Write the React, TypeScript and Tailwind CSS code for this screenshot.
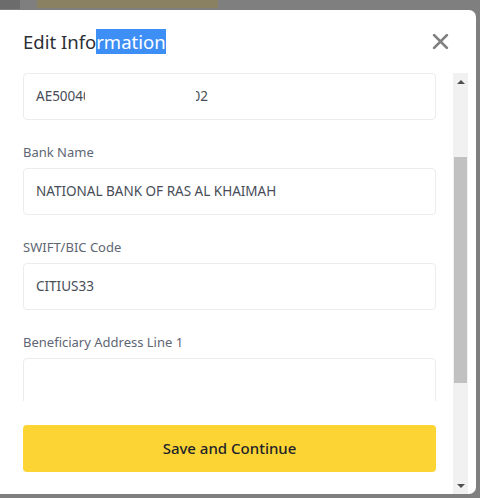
import React from 'react';

const fields = [
  { label: 'Bank Name', value: 'NATIONAL BANK OF RAS AL KHAIMAH' },
  { label: 'SWIFT/BIC Code', value: 'CITIUS33' },
  { label: 'Beneficiary Address Line 1', value: '' },
];

const Input: React.FC<{ children?: React.ReactNode }> = ({ children }) => (
  <div className="h-[47px] shrink-0 rounded-[4px] border border-[#eaecef] flex items-center px-[12px] text-[13.5px] text-[#474d57]">
    {children}
  </div>
);

const Scrollbar: React.FC = () => (
  <div className="w-[15px] bg-[#f1f1f1] flex flex-col items-center">
    <div className="h-[17px] flex items-center justify-center">
      <div className="w-0 h-0 border-x-[4px] border-x-transparent border-b-[4px] border-b-[#505050]" />
    </div>
    <div className="h-[67px]" />
    <div className="w-[13px] h-[226px] bg-[#c1c1c1]" />
    <div className="flex-1" />
    <div className="h-[17px] flex items-center justify-center">
      <div className="w-0 h-0 border-x-[4px] border-x-transparent border-t-[4px] border-t-[#505050]" />
    </div>
  </div>
);

export default function App() {
  return (
    <div className="w-[480px] h-[498px] bg-[#7f7f7f] overflow-hidden font-['Noto_Sans',sans-serif]">
      <div className="h-[10px] flex gap-[17px]">
        <div className="w-[20px] h-[9px] bg-[#6c6c6c]" />
        <div className="w-[181px] h-[8px] bg-[#8a8162]" />
      </div>
      <div className="w-[476px] h-[484px] bg-white rounded-r-[7px] flex flex-col">
        <div className="h-[63px] shrink-0 flex items-center justify-between pl-[23px] pr-[27px]">
          <h2 className="text-[18.5px] leading-[27px] text-[#2b2f36]">
            Edit Info<span className="bg-[#3d8ef5] text-white">rmation</span>
          </h2>
          <svg width="17" height="17" viewBox="0 0 16 16" className="text-[#808080]">
            <path d="M2 2L14 14M14 2L2 14" stroke="currentColor" strokeWidth="2.6" strokeLinecap="round" />
          </svg>
        </div>
        <div className="flex flex-1">
          <div className="w-[453px] flex flex-col">
            <div className="h-[328px] overflow-hidden pl-[23px] pr-[17px] flex flex-col">
              <Input>
                <span>AE5004</span>
                <span className="inline-block w-[2px] overflow-hidden">0</span>
                <span className="inline-block w-[111px]" />
                <span className="inline-flex justify-end w-[12px] overflow-hidden">
                  <span>02</span>
                </span>
              </Input>
              {fields.map(f => (
                <div key={f.label} className="flex flex-col">
                  <label className="pt-[24px] pb-[7px] leading-[17px] text-[13px] text-[#5e6673]">{f.label}</label>
                  <Input>{f.value}</Input>
                </div>
              ))}
            </div>
            <div className="pl-[23px] pr-[17px] pt-[24px]">
              <button className="w-full h-[47px] rounded-[4px] bg-[#fcd535] text-[15px] font-medium text-[#1e2329]">
                Save and Continue
              </button>
            </div>
          </div>
          <Scrollbar />
        </div>
      </div>
    </div>
  );
}
